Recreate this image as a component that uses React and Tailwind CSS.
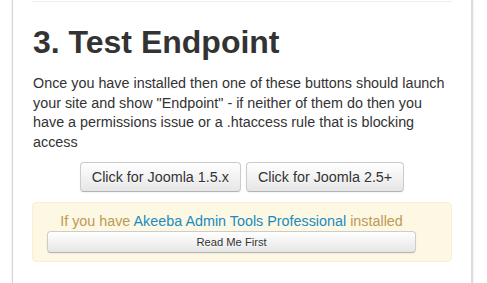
export default function App() {
  const btn =
    "rounded-[4px] border border-[#cccccc] border-b-[#b3b3b3] bg-gradient-to-b from-white to-[#e6e6e6] text-[#333333] shadow-[inset_0_1px_0_rgba(255,255,255,0.2),0_1px_2px_rgba(0,0,0,0.05)] [text-shadow:0_1px_1px_rgba(255,255,255,0.75)]";
  return (
    <div
      className="min-h-[283px] w-[487px] bg-white overflow-hidden"
      style={{ fontFamily: '"Liberation Sans", Arial, sans-serif' }}
    >
      <div className="ml-[12px] w-[461px] h-[283px] border-l border-r-2 border-l-[#d6d6d6] border-r-[#dcdcdc] shadow-[0_0_2px_rgba(0,0,0,0.12)] px-[19px]">
        <div className="pt-[1px]">
          <div className="border-t border-t-[#eeeeee] border-b border-b-white" />
        </div>
        <h2 className="mt-[19px] pl-[1px] text-[32px] leading-[40px] font-bold text-[#333333]">
          3. Test Endpoint
        </h2>
        <p className="mt-[12px] pl-[1px] text-[14.35px] leading-[19.7px] text-[#333333]">
          Once you have installed then one of these buttons should launch your
          site and show "Endpoint" - if neither of them do then you have a
          permissions issue or a .htaccess rule that is blocking access
        </p>
        <div className="mt-[9px] flex justify-center gap-[5px]">
          <button className={`${btn} px-[11px] py-[4px] text-[14.35px] leading-[20px]`}>
            Click for Joomla 1.5.x
          </button>
          <button className={`${btn} px-[11px] py-[4px] text-[14.35px] leading-[20px]`}>
            Click for Joomla 2.5+
          </button>
        </div>
        <div className="mt-[10px] rounded-[4px] border border-[#fbeed5] bg-[#fcf8e3] pt-[8px] pb-[8px] pl-[14px] pr-[35px]">
          <div className="text-center text-[14.35px] leading-[20px] text-[#c09853]">
            If you have{" "}
            <span className="text-[#1b8bc0]">Akeeba Admin Tools Professional</span>{" "}
            installed
          </div>
          <button className={`${btn} block w-full text-[11.2px] leading-[20px] py-0`}>
            Read Me First
          </button>
        </div>
      </div>
    </div>
  );
}
